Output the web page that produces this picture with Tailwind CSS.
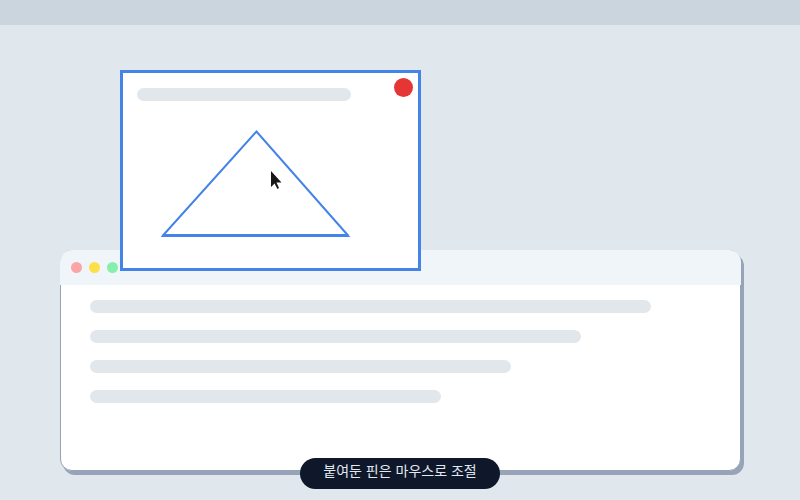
<!DOCTYPE html>
<html lang="ko">
<head>
    <meta charset="UTF-8">
    <meta name="viewport" content="width=device-width, initial-scale=1.0">
    <title>핀 조절</title>
    <script src="https://cdn.jsdelivr.net/npm/@tailwindcss/browser@4"></script>
</head>
<body class="bg-[#e0e7ed] font-['Noto_Sans_CJK_KR',sans-serif]">
    <div class="relative flex min-h-screen flex-col overflow-hidden">
        <!-- Menu bar -->
        <header class="h-[25px] bg-[#cbd5de]"></header>

        <!-- Desktop -->
        <main class="flex flex-1 flex-col justify-end px-[60px] pb-[29px]">
            <!-- App window -->
            <section class="-mr-px flex h-[221px] flex-col rounded-xl border border-[#94a3b8] bg-white shadow-[3px_4px_0_#97a3b8]">
                <div class="-mx-px -mt-px flex h-[35px] items-center gap-[7px] rounded-t-xl bg-[#f0f5f9] px-[11px]">
                    <span class="size-[11px] rounded-full bg-[#fca5a5]"></span>
                    <span class="size-[11px] rounded-full bg-[#fde047]"></span>
                    <span class="size-[11px] rounded-full bg-[#86efac]"></span>
                </div>
                <div class="flex flex-col gap-[17px] px-[29px] pt-[15px]">
                    <div class="h-[13px] w-[561px] rounded-full bg-[#e2e7ec]"></div>
                    <div class="h-[13px] w-[491px] rounded-full bg-[#e2e7ec]"></div>
                    <div class="h-[13px] w-[421px] rounded-full bg-[#e2e7ec]"></div>
                    <div class="h-[13px] w-[351px] rounded-full bg-[#e2e7ec]"></div>
                </div>
            </section>
        </main>

        <!-- Pinned capture -->
        <section class="absolute left-[120px] top-[70px] w-[301px] border-[3px] border-[#4483e8] bg-white">
            <div class="flex items-start justify-between pl-[14px] pr-[5px] pt-[5px]">
                <div class="mt-[10px] h-[13px] w-[214px] rounded-full bg-[#e2e7ec]"></div>
                <button type="button" aria-label="닫기" class="size-[19px] rounded-full bg-[#e63535]"></button>
            </div>
            <svg class="block h-[167px] w-full" viewBox="123 101 295 167" fill="none">
                <path d="M162.500 236 L256.500 131.500 L348.500 236" stroke="#4483e8" stroke-width="2"/>
                <path d="M160.500 237 L163.500 234 H347 L350.500 237 Z" fill="#4483e8"/>
            </svg>
        </section>

        <!-- Mouse pointer -->
        <svg class="absolute left-[270px] top-[170px] h-5 w-3" viewBox="0 0 12 20">
            <path d="M1 1 V17 L4.500 13.500 L7.500 19 L9 18 L6.500 12.500 H11.500 Z" fill="#18181b"/>
        </svg>

        <!-- Caption -->
        <p class="absolute bottom-[11px] left-1/2 h-[31px] w-[200px] -translate-x-1/2 rounded-full bg-[#0f172a] text-center text-sm leading-6 text-[#e2e8f0]">붙여둔 핀은 마우스로 조절</p>
    </div>
</body>
</html>
